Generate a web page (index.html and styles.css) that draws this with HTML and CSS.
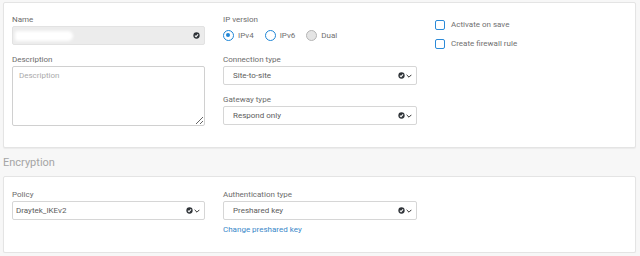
FILE: index.html
```html
<!DOCTYPE html>
<html lang="en">
<head>
    <meta charset="UTF-8">
    <meta name="viewport" content="width=device-width, initial-scale=1.0">
    <title>IPsec connection</title>
    <link rel="stylesheet" href="styles.css">
</head>
<body>
    <div class="card card-general">
        <div class="form-grid">
            <div class="form-col">
                <div class="form-group">
                    <label>Name</label>
                    <div class="field field-readonly">
                        <span class="redacted"></span>
                        <span class="field-icons">
                            <svg class="ok-icon" viewBox="0 0 8 8"><circle cx="4" cy="4" r="3.6" fill="#2f3338"/><path d="M2.2 4.1 L3.5 5.3 L5.8 2.8" fill="none" stroke="#fff" stroke-width="1.2"/></svg>
                        </span>
                    </div>
                </div>
                <div class="form-group">
                    <label>Description</label>
                    <textarea class="field-area" placeholder="Description"></textarea>
                </div>
            </div>

            <div class="form-col">
                <div class="form-group">
                    <label>IP version</label>
                    <div class="radio-row">
                        <span class="radio checked"></span><span class="radio-text">IPv4</span>
                        <span class="radio"></span><span class="radio-text">IPv6</span>
                        <span class="radio disabled"></span><span class="radio-text">Dual</span>
                    </div>
                </div>
                <div class="form-group">
                    <label>Connection type</label>
                    <div class="field">
                        <span class="field-value">Site-to-site</span>
                        <span class="field-icons">
                            <svg class="ok-icon" viewBox="0 0 8 8"><circle cx="4" cy="4" r="3.6" fill="#2f3338"/><path d="M2.2 4.1 L3.5 5.3 L5.8 2.8" fill="none" stroke="#fff" stroke-width="1.2"/></svg>
                            <svg class="chevron" viewBox="0 0 6 4"><path d="M0.6 0.8 L3 3.2 L5.4 0.8" fill="none" stroke="#333" stroke-width="1"/></svg>
                        </span>
                    </div>
                </div>
                <div class="form-group">
                    <label>Gateway type</label>
                    <div class="field">
                        <span class="field-value">Respond only</span>
                        <span class="field-icons">
                            <svg class="ok-icon" viewBox="0 0 8 8"><circle cx="4" cy="4" r="3.6" fill="#2f3338"/><path d="M2.2 4.1 L3.5 5.3 L5.8 2.8" fill="none" stroke="#fff" stroke-width="1.2"/></svg>
                            <svg class="chevron" viewBox="0 0 6 4"><path d="M0.6 0.8 L3 3.2 L5.4 0.8" fill="none" stroke="#333" stroke-width="1"/></svg>
                        </span>
                    </div>
                </div>
            </div>

            <div class="form-col check-col">
                <div class="check-row"><span class="checkbox"></span>Activate on save</div>
                <div class="check-row"><span class="checkbox"></span>Create firewall rule</div>
            </div>
        </div>
    </div>

    <h3 class="section-title">Encryption</h3>

    <div class="card card-encryption">
        <div class="form-grid">
            <div class="form-col">
                <div class="form-group">
                    <label>Policy</label>
                    <div class="field field-tight">
                        <span class="field-value">Draytek_IKEv2</span>
                        <span class="field-icons">
                            <svg class="ok-icon" viewBox="0 0 8 8"><circle cx="4" cy="4" r="3.6" fill="#2f3338"/><path d="M2.2 4.1 L3.5 5.3 L5.8 2.8" fill="none" stroke="#fff" stroke-width="1.2"/></svg>
                            <svg class="chevron" viewBox="0 0 6 4"><path d="M0.6 0.8 L3 3.2 L5.4 0.8" fill="none" stroke="#333" stroke-width="1"/></svg>
                        </span>
                    </div>
                </div>
            </div>
            <div class="form-col">
                <div class="form-group">
                    <label>Authentication type</label>
                    <div class="field">
                        <span class="field-value">Preshared key</span>
                        <span class="field-icons">
                            <svg class="ok-icon" viewBox="0 0 8 8"><circle cx="4" cy="4" r="3.6" fill="#2f3338"/><path d="M2.2 4.1 L3.5 5.3 L5.8 2.8" fill="none" stroke="#fff" stroke-width="1.2"/></svg>
                            <svg class="chevron" viewBox="0 0 6 4"><path d="M0.6 0.8 L3 3.2 L5.4 0.8" fill="none" stroke="#333" stroke-width="1"/></svg>
                        </span>
                    </div>
                    <a class="link" href="#">Change preshared key</a>
                </div>
            </div>
            <div class="form-col"></div>
        </div>
    </div>
</body>
</html>
```

FILE: styles.css
```css
body {
    font-family: Roboto, "Noto Sans", sans-serif;
    font-size: 8px;
    color: #707070;
    margin: 0;
    padding: 2px 4px 0 3px;
    background-color: #f7f7f7;
}
.card {
    background-color: #fff;
    border: 1px solid #e4e4e4;
    border-radius: 2px;
    box-shadow: 0 1px 1px rgba(0, 0, 0, 0.05);
    padding: 12px 8px 21px 8px;
}
.card-encryption {
    padding: 13px 8px 17px 8px;
}
.form-grid {
    display: grid;
    grid-template-columns: 193px 194px 1fr;
    column-gap: 18px;
}
.form-group {
    margin-bottom: 10px;
}
.form-group:last-child {
    margin-bottom: 0;
}
.form-group label {
    display: block;
    line-height: 10px;
    margin-bottom: 1px;
    color: #6c6c6c;
}
.field {
    position: relative;
    display: flex;
    align-items: center;
    height: 19px;
    box-sizing: border-box;
    border: 1px solid #d6d6d6;
    border-radius: 2px;
    padding: 0 4px 0 9px;
    color: #5c5c5c;
    background-color: #fff;
}
.field-tight {
    padding-left: 3px;
}
.field-readonly {
    background-color: #ececec;
    border-color: #e2e2e2;
}
.field-value {
    flex: 1;
}
.field-icons {
    margin-left: auto;
    display: flex;
    align-items: center;
    gap: 1px;
}
.ok-icon {
    width: 7px;
    height: 7px;
}
.chevron {
    width: 6px;
    height: 4px;
}
.redacted {
    width: 58px;
    height: 10px;
    border-radius: 3px 6px 6px 3px;
    background-color: #fff;
    filter: blur(1.5px);
    margin-left: -7px;
}
.field-area {
    display: block;
    width: 100%;
    height: 60px;
    box-sizing: border-box;
    border: 1px solid #d0d0d0;
    border-radius: 2px;
    padding: 4px 6px;
    font-family: inherit;
    font-size: 8px;
    color: #5c5c5c;
    resize: vertical;
    margin: 0;
}
.field-area::placeholder {
    color: #aaa;
}
.radio-row {
    display: flex;
    align-items: center;
    height: 19px;
}
.radio {
    width: 11px;
    height: 11px;
    box-sizing: border-box;
    border: 1.5px solid #1f86d6;
    border-radius: 50%;
    position: relative;
    margin-right: 4px;
}
.radio.checked::after {
    content: "";
    position: absolute;
    left: 2px;
    top: 2px;
    width: 4px;
    height: 4px;
    border-radius: 50%;
    background-color: #1f86d6;
}
.radio.disabled {
    border-color: #b5b5b5;
    background-color: #e4e4e4;
}
.radio-text {
    margin-right: 11px;
}
.check-col {
    display: flex;
    flex-direction: column;
}
.check-row {
    display: flex;
    align-items: center;
    height: 19px;
}
.checkbox {
    width: 10px;
    height: 10px;
    box-sizing: border-box;
    border: 1.5px solid #2b8ad8;
    border-radius: 2px;
    margin-right: 6px;
}
.section-title {
    margin: 0;
    height: 28px;
    padding-top: 2px;
    box-sizing: border-box;
    line-height: 26px;
    font-size: 11px;
    font-weight: normal;
    color: #a5a5a5;
}
.link {
    display: block;
    margin-top: 5px;
    line-height: 10px;
    color: #3a88c9;
    text-decoration: none;
}
```
